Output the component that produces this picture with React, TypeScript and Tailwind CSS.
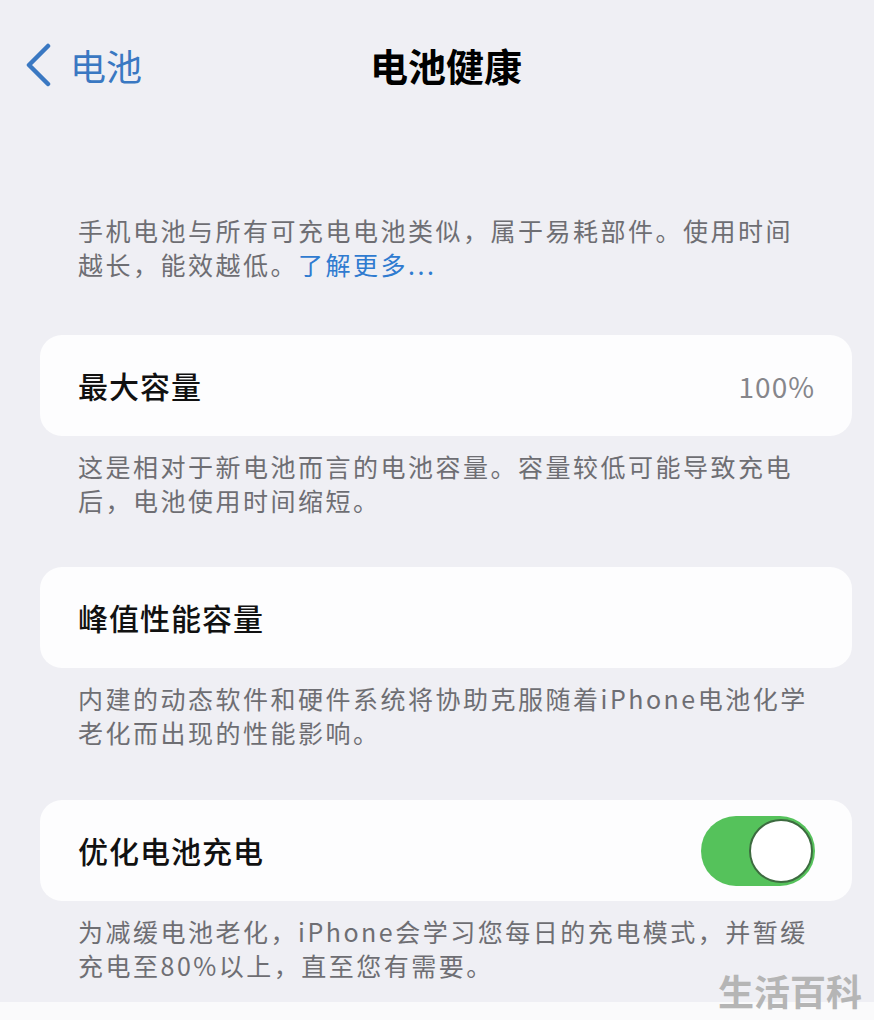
import React from "react";

const font = { fontFamily: '"Noto Sans CJK SC", "Noto Sans", sans-serif' };

function Note({ children }: { children: React.ReactNode }) {
  return (
    <p className="w-fit pl-[78px] text-[25px] leading-[34px] tracking-[2.5px] text-[#6e6e73]">
      {children}
    </p>
  );
}

function Card({ children }: { children: React.ReactNode }) {
  return (
    <div className="ml-[40px] mr-[22px] flex h-[101px] items-center justify-between rounded-[22px] bg-[#fdfdfe] pl-[38px] pr-[37px]">
      {children}
    </div>
  );
}

export default function App() {
  return (
    <div
      className="relative flex h-[1020px] w-[874px] flex-col overflow-hidden bg-[#efeff4]"
      style={font}
    >
      {/* nav */}
      <header className="relative flex h-[130px] items-center justify-center pl-[18px]">
        <div className="absolute left-[24px] top-[43px] flex items-center gap-[18px] text-[#3a78c2]">
          <svg width="28" height="44" viewBox="0 0 28 44" fill="none">
            <path
              d="M24 3 L5 22 L24 41"
              stroke="currentColor"
              strokeWidth="4.5"
              strokeLinecap="round"
              strokeLinejoin="round"
            />
          </svg>
          <span className="text-[36px] leading-none">电池</span>
        </div>
        <h1 className="text-[38px] font-bold leading-none text-black">电池健康</h1>
      </header>

      <div className="mt-[83px]">
        <Note>
          手机电池与所有可充电电池类似，属于易耗部件。使用时间
          <br />
          越长，能效越低。<span className="text-[#2f7bd0]">了解更多...</span>
        </Note>
      </div>

      <div className="mt-[54px]">
        <Card>
          <span className="text-[30px] font-medium tracking-[1px] text-[#111]">最大容量</span>
          <span className="text-[28px] tracking-[1px] text-[#86868b]">100%</span>
        </Card>
      </div>

      <div className="mt-[13px]">
        <Note>
          这是相对于新电池而言的电池容量。容量较低可能导致充电
          <br />
          后，电池使用时间缩短。
        </Note>
      </div>

      <div className="mt-[50px]">
        <Card>
          <span className="text-[30px] font-medium tracking-[1px] text-[#111]">峰值性能容量</span>
        </Card>
      </div>

      <div className="mt-[13px]">
        <Note>
          内建的动态软件和硬件系统将协助克服随着iPhone电池化学
          <br />
          老化而出现的性能影响。
        </Note>
      </div>

      <div className="mt-[51px]">
        <Card>
          <span className="text-[30px] font-medium tracking-[1px] text-[#111]">优化电池充电</span>
          <div className="flex h-[70px] w-[114px] items-center justify-end rounded-full bg-[#55c25b] pr-[2px]">
            <div className="h-[64px] w-[64px] rounded-full border-[2px] border-[#3d6b40] bg-white" />
          </div>
        </Card>
      </div>

      <div className="mt-[13px]">
        <Note>
          为减缓电池老化，iPhone会学习您每日的充电模式，并暂缓
          <br />
          充电至80%以上，直至您有需要。
        </Note>
      </div>

      <div className="mt-auto h-[18px] bg-[#fafafb]" />

      <div className="absolute bottom-[8px] right-[12px] py-[2px] text-[36px] font-bold leading-[40px] text-[#b5b5b5]">
        生活百科
      </div>
    </div>
  );
}
